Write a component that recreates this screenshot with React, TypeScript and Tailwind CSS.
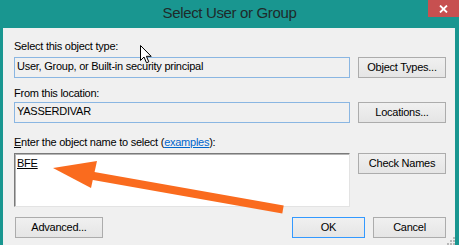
import React from "react";

const font = "font-['Liberation_Sans',Arial,sans-serif]";

function Btn({ children, w, def }: { children: React.ReactNode; w: string; def?: boolean }) {
  return (
    <div
      className={`${w} h-[21px] flex items-center justify-center border ${
        def ? "border-[#3399ff]" : "border-[#acacac]"
      } bg-gradient-to-b from-[#f0f0f0] to-[#e5e5e5] text-[11px] leading-[13px] tracking-[-0.25px] text-black`}
    >
      {children}
    </div>
  );
}

export default function App() {
  return (
    <div className={`relative w-[459px] h-[245px] overflow-hidden bg-[#199690] flex flex-col ${font}`}>
      {/* title bar */}
      <div className="h-[28px] grid grid-cols-[31px_1fr_31px]">
        <div />
        <div className="pt-[4px] text-center text-[15px] leading-[18px] tracking-[-0.35px] text-[#1f2a2a]">
          Select User or Group
        </div>
        <div className="h-[17px] bg-[#c75050] flex items-center justify-center">
          <svg width="9" height="8" viewBox="0 0 9 8">
            <path d="M1 0.5 L8 7.5 M8 0.5 L1 7.5" stroke="white" strokeWidth="1.8" />
          </svg>
        </div>
      </div>

      {/* client area */}
      <div className="flex-1 ml-[3px] mr-[4px] bg-[#f0f0f0] pl-[11px] flex flex-col text-[11px] leading-[13px] tracking-[-0.25px] text-black">
        <div className="mt-[12px]">Select this object type:</div>
        <div className="mt-[4px] flex gap-[8px]">
          <div className="w-[336px] h-[21px] border border-[#8ab6e2] px-[2px] pt-[2px]">
            User, Group, or Built-in security principal
          </div>
          <Btn w="w-[88px]">Object Types...</Btn>
        </div>

        <div className="mt-[9px]">From this location:</div>
        <div className="mt-[2px] flex gap-[8px]">
          <div className="w-[336px] h-[21px] border border-[#8ab6e2] px-[2px] pt-[2px]">YASSERDIVAR</div>
          <Btn w="w-[88px]">Locations...</Btn>
        </div>

        <div className="mt-[13px]">
          <span className="underline">E</span>nter the object name to select (
          <span className="text-[#0066cc] underline">examples</span>):
        </div>
        <div className="mt-[4px] flex gap-[8px] items-start">
          <div className="w-[336px] h-[54px] bg-white border border-t-[#7a7a7a] border-l-[#7a7a7a] border-r-[#e3e3e3] border-b-[#e3e3e3] shadow-[inset_1px_1px_0_#b5b5b5] px-[2px] pt-[3px]">
            <span className="underline">BFE</span>
          </div>
          <Btn w="w-[88px]">Check Names</Btn>
        </div>

        <div className="mt-[10px] flex">
          <div className="ml-[1px]">
            <Btn w="w-[88px]">Advanced...</Btn>
          </div>
          <div className="ml-[189px] flex gap-[8px]">
            <Btn w="w-[73px]" def>
              OK
            </Btn>
            <Btn w="w-[73px]">Cancel</Btn>
          </div>
        </div>
      </div>

      {/* size grip */}
      <svg className="absolute left-[447px] top-[237px]" width="8" height="8" viewBox="0 0 8 8">
        {[
          [6, 0],
          [3, 3],
          [6, 3],
          [0, 6],
          [3, 6],
          [6, 6],
        ].map(([x, y], i) => (
          <rect key={i} x={x} y={y} width="2" height="2" fill="#b8b8b8" />
        ))}
      </svg>

      {/* annotation arrow */}
      <svg className="absolute left-0 top-0 pointer-events-none" width="459" height="245" viewBox="0 0 459 245">
        <line x1="88" y1="175" x2="283" y2="209.5" stroke="#fa6b1e" strokeWidth="8" />
        <polygon points="53,168 97,161 91,188" fill="#fa6b1e" />
      </svg>

      {/* mouse cursor */}
      <svg className="absolute left-[140px] top-[45px] pointer-events-none" width="13" height="19" viewBox="0 0 13 19">
        <path
          d="M0.5 0.5 L0.5 15.5 L4 12 L6.5 17.8 L8.8 16.8 L6.4 11.3 L11.2 11.3 Z"
          fill="white"
          stroke="black"
          strokeWidth="1"
          strokeLinejoin="miter"
        />
      </svg>
    </div>
  );
}
